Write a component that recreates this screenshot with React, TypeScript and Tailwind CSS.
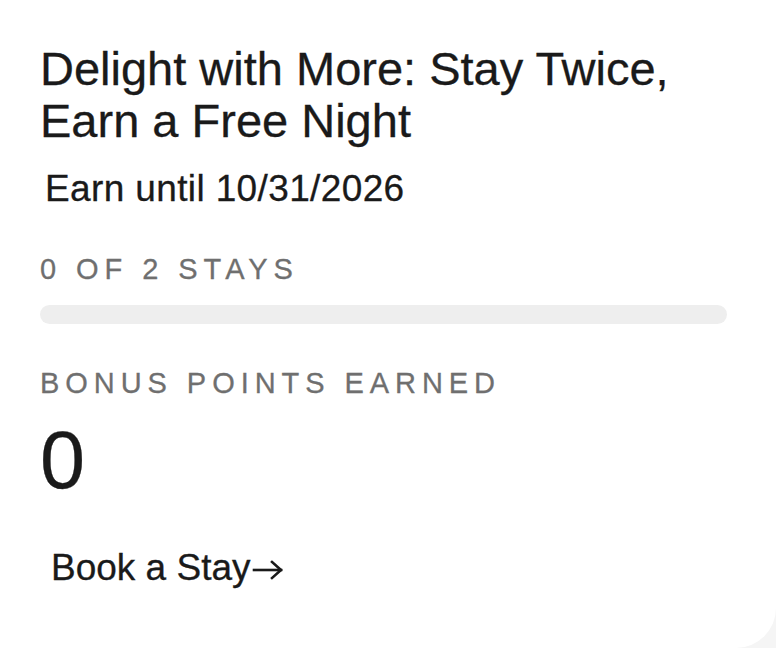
import React from 'react';

export default function App() {
  const stays = 0;
  const required = 2;

  return (
    <div className="h-[648px] w-full bg-[#f5f5f5]" style={{ fontFamily: '"Liberation Sans", Arial, sans-serif' }}>
      <div className="flex h-full w-full flex-col rounded-br-[40px] bg-white pl-[40px] pr-[49px] pt-[43px] [-webkit-text-stroke:0.3px]">
        <h1 className="text-[47px] leading-[52px] text-[#1a1a1a]">
          Delight with More: Stay Twice, Earn a Free Night
        </h1>
        <p className="ml-[5px] mt-[22px] text-[37px] leading-[40px] tracking-[0.01em] text-[#1a1a1a]">
          Earn until 10/31/2026
        </p>

        <p className="mt-[44px] text-[29px] leading-[32px] tracking-[0.205em] text-[#6f6f6f]">
          {stays} OF {required} STAYS
        </p>
        <div className="mt-[20px] h-[19px] w-full rounded-full bg-[#eeeeee]">
          <div className="h-full rounded-full bg-[#1a1a1a]" style={{ width: `${(stays / required) * 100}%` }} />
        </div>

        <p className="mt-[43px] text-[29px] leading-[32px] tracking-[0.205em] text-[#6f6f6f]">
          BONUS POINTS EARNED
        </p>
        <p className="mt-[21px] text-[81px] leading-[80px] text-[#1a1a1a]">0</p>

        <a href="#" className="ml-[11px] mt-[48px] flex items-center text-[37px] leading-[40px] text-[#1a1a1a]">
          Book a Stay
          <svg className="ml-[1px] mt-[4px] h-[22px] w-[32px]" viewBox="0 0 32 22" fill="none" stroke="currentColor" strokeWidth="2.6" strokeLinecap="square">
            <path d="M2 11h27" />
            <path d="M20 3l9 8-9 8" />
          </svg>
        </a>
      </div>
    </div>
  );
}
